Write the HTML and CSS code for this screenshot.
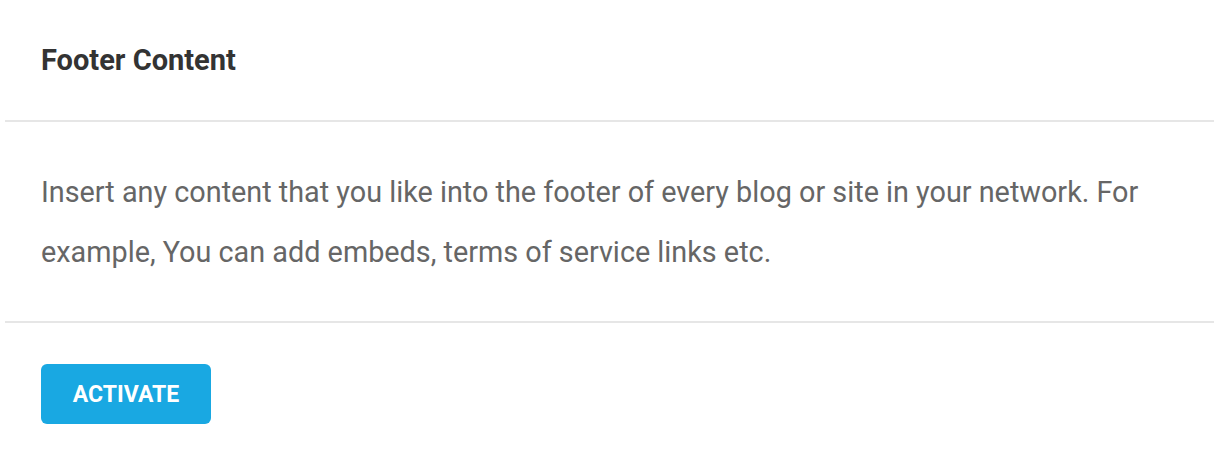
FILE: index.html
```html
<!DOCTYPE html>
<html lang="en">
<head>
<meta charset="utf-8">
<title>Footer Content</title>
<link rel="stylesheet" href="styles.css">
</head>
<body>
<div class="card">
  <div class="card-header">
    <h2 class="card-title">Footer Content</h2>
  </div>
  <div class="card-body">
    <p class="card-text">Insert any content that you like into the footer of every blog or site in your network. For example, You can add embeds, terms of service links etc.</p>
  </div>
  <div class="card-footer">
    <button class="btn-activate" type="button">ACTIVATE</button>
  </div>
</div>
</body>
</html>
```

FILE: styles.css
```css
html, body {
  margin: 0;
  padding: 0;
  background: #ffffff;
}
body {
  font-family: Roboto, "Liberation Sans", Arial, sans-serif;
}
.card {
  margin: 0 6px 0 5px;
  background: #ffffff;
}
.card-header {
  height: 120px;
  padding: 0 36px;
  display: flex;
  align-items: center;
  border-bottom: 2px solid #e6e6e6;
}
.card-title {
  margin: 0;
  font-size: 29px;
  line-height: 29px;
  font-weight: 700;
  color: #333333;
}
.card-body {
  padding: 40px 36px 39px;
  border-bottom: 2px solid #e6e6e6;
}
.card-text {
  margin: 0;
  font-size: 28.8px;
  line-height: 60px;
  color: #666666;
}
.card-footer {
  padding: 41px 36px 40px;
}
.btn-activate {
  width: 170px;
  height: 60px;
  border: 0;
  border-radius: 6px;
  background: #19a8e2;
  color: #ffffff;
  font-family: Roboto, "Liberation Sans", Arial, sans-serif;
  font-size: 23px;
  font-weight: 700;
  padding: 0;
  cursor: pointer;
}
```
